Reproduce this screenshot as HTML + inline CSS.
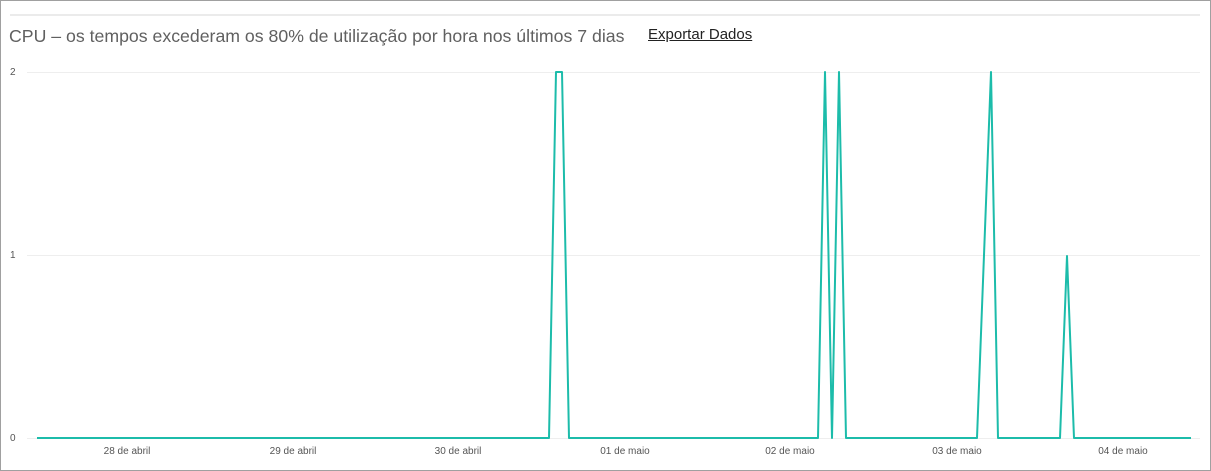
<!DOCTYPE html>
<html><head><style>
body{margin:0;width:1211px;height:471px;overflow:hidden;background:#fff;font-family:"Liberation Sans",sans-serif}
.f{position:absolute;left:0;top:0;width:1209px;height:469px;border:1px solid #a0a0a0}
.t{position:absolute;left:9px;top:26px;font-size:17.7px;color:#606060;white-space:nowrap}
.e{position:absolute;left:648px;top:26px;font-size:15px;color:#222;text-decoration:underline}
</style></head><body>
<div class="f"></div>
<div class="t">CPU – os tempos excederam os 80% de utilização por hora nos últimos 7 dias</div>
<div class="e">Exportar Dados</div>
<svg width="1211" height="471" style="position:absolute;left:0;top:0">
<line x1="10" y1="15" x2="1200" y2="15" stroke="#ebebeb" stroke-width="2"/>
<g stroke="#eeeeee" stroke-width="1">
<line x1="27" y1="72.5" x2="1200" y2="72.5"/><line x1="27" y1="255.5" x2="1200" y2="255.5"/><line x1="27" y1="438.5" x2="1200" y2="438.5"/></g>
<g font-size="10" fill="#555" font-family="Liberation Sans,sans-serif">
<text x="10" y="75">2</text><text x="10" y="258">1</text><text x="10" y="441">0</text>
<g text-anchor="middle"><text x="127" y="454">28 de abril</text><text x="293" y="454">29 de abril</text><text x="458" y="454">30 de abril</text><text x="625" y="454">01 de maio</text><text x="790" y="454">02 de maio</text><text x="957" y="454">03 de maio</text><text x="1123" y="454">04 de maio</text></g></g>
<polyline fill="none" stroke="#1cbcaa" stroke-width="2" stroke-linejoin="round" points="37,438 549,438 556,72 562,72 569,438 818,438 825,72 832,438 839,72 846,438 977,438 991,72 998,438 1060,438 1067,256 1074,438 1191,438"/>
</svg>
</body></html>
